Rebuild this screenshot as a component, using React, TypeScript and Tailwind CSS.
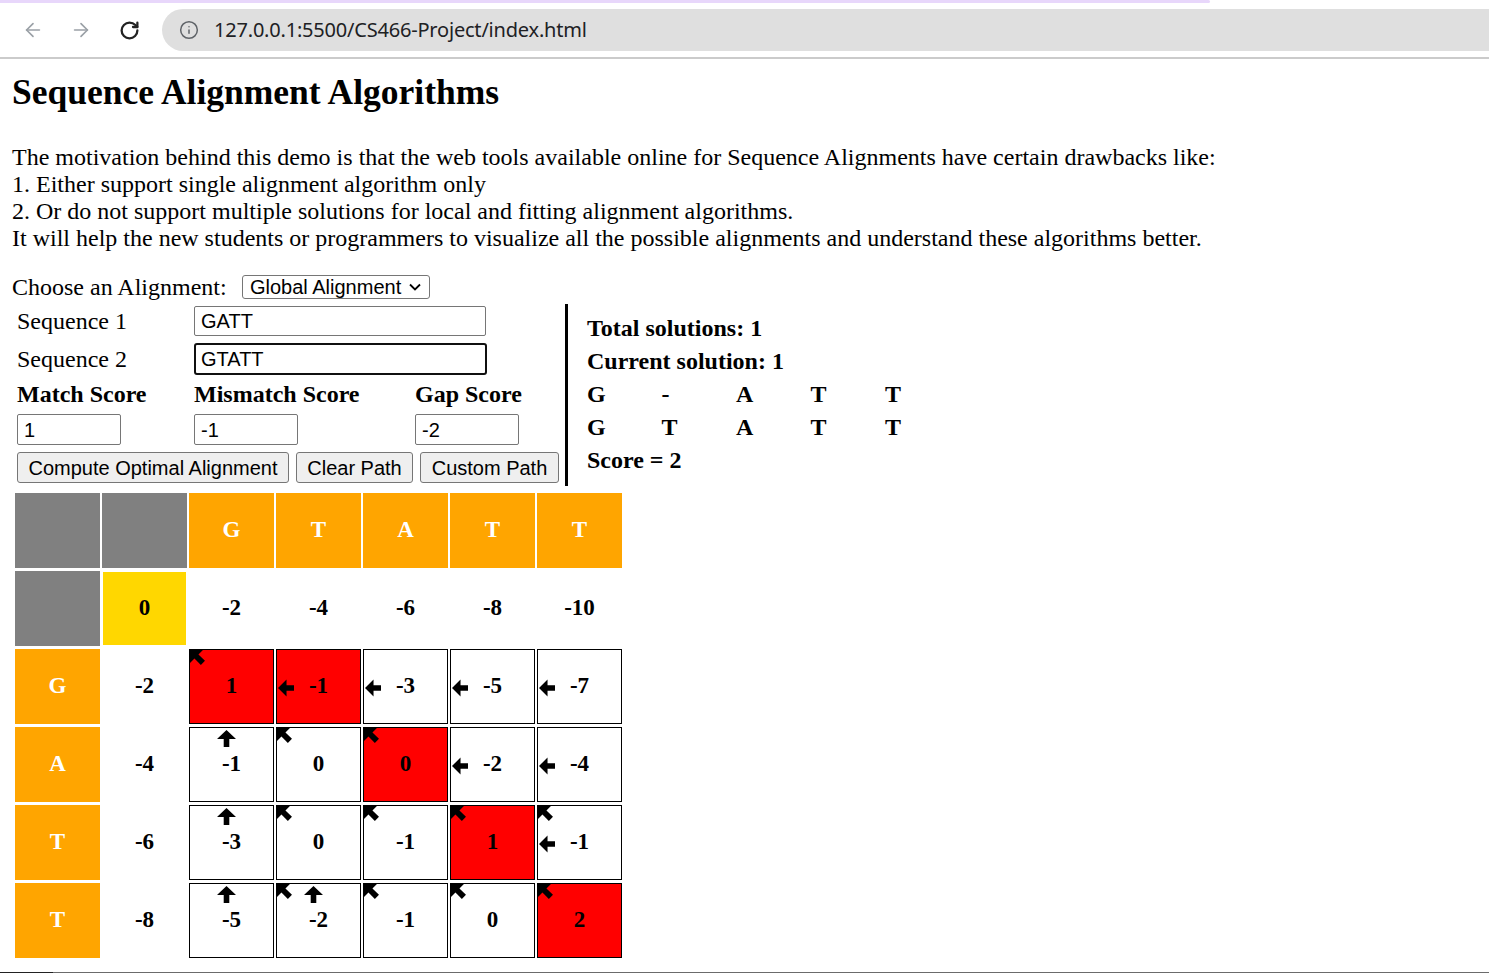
import { ArrowLeft, ArrowRight, RotateCw, Info } from 'lucide-react';

type Cell = { v: number; red?: boolean; d?: boolean; l?: boolean; u?: boolean };

const topLetters = ['G', 'T', 'A', 'T', 'T'];
const topRow = [-2, -4, -6, -8, -10];

const rows: { letter: string; head: number; cells: Cell[] }[] = [
  {
    letter: 'G',
    head: -2,
    cells: [
      { v: 1, red: true, d: true },
      { v: -1, red: true, l: true },
      { v: -3, l: true },
      { v: -5, l: true },
      { v: -7, l: true },
    ],
  },
  {
    letter: 'A',
    head: -4,
    cells: [{ v: -1, u: true }, { v: 0, d: true }, { v: 0, red: true, d: true }, { v: -2, l: true }, { v: -4, l: true }],
  },
  {
    letter: 'T',
    head: -6,
    cells: [{ v: -3, u: true }, { v: 0, d: true }, { v: -1, d: true }, { v: 1, red: true, d: true }, { v: -1, d: true, l: true }],
  },
  {
    letter: 'T',
    head: -8,
    cells: [{ v: -5, u: true }, { v: -2, d: true, u: true }, { v: -1, d: true }, { v: 0, d: true }, { v: 2, red: true, d: true }],
  },
];

const serif = "font-['Liberation_Serif','Times_New_Roman',serif]";
const sans = "font-['Liberation_Sans',Arial,sans-serif]";

// little arrow pictures drawn in the score cells
function DiagArrow() {
  return (
    <svg className="absolute left-0 top-0" width="16" height="16" viewBox="0 0 14 14">
      <path d="M0 0 L11.3 0 L7.4 3.9 L13.1 9.5 L9.5 13.1 L3.9 7.4 L0 11.3 Z" fill="#000" />
    </svg>
  );
}

function LeftArrow() {
  return (
    <svg className="absolute left-[1px] top-[29px]" width="16" height="18" viewBox="0 0 15 16">
      <path d="M0 8 L8 0 L8 5.5 L15 5.5 L15 10.5 L8 10.5 L8 16 Z" fill="#000" />
    </svg>
  );
}

function UpArrow() {
  return (
    <svg className="absolute left-[27px] top-[2px]" width="19" height="17" viewBox="0 0 17 15">
      <path d="M8.5 0 L17 8 L11 8 L11 15 L6 15 L6 8 L0 8 Z" fill="#000" />
    </svg>
  );
}

function ScoreCell({ cell }: { cell: Cell }) {
  return (
    <div
      className={`relative flex items-center justify-center border-[1.5px] border-black overflow-hidden ${
        cell.red ? 'bg-[#ff0000]' : 'bg-white'
      }`}
    >
      {cell.d && <DiagArrow />}
      {cell.l && <LeftArrow />}
      {cell.u && <UpArrow />}
      <span>{cell.v}</span>
    </div>
  );
}

export default function App() {
  return (
    <div className={`h-[973px] w-full flex flex-col overflow-hidden bg-white text-black ${serif}`}>
      {/* Browser chrome */}
      <div className="h-[3px] w-[1210px] bg-[#e8d7fb] rounded-r-[2px]" />
      <div className="h-[54px] flex items-center">
        <div className="w-[66px] flex justify-center">
          <ArrowLeft size={22} strokeWidth={1.8} className="text-[#9aa0a6]" />
        </div>
        <div className="w-[30px] flex justify-center">
          <ArrowRight size={22} strokeWidth={1.8} className="text-[#9aa0a6]" />
        </div>
        <div className="w-[66px] flex justify-center">
          <RotateCw size={21} strokeWidth={2.6} className="text-[#222]" />
        </div>
        <div className="flex-1 h-[42px] bg-[#dfdfdf] rounded-l-full flex items-center pl-[17px] gap-[15px]">
          <Info size={20} strokeWidth={1.8} className="text-[#5f6368]" />
          <span className="font-['Noto_Sans',sans-serif] text-[20px] text-[#202124] tracking-[-0.2px]">
            127.0.0.1:5500/CS466-Project/index.html
          </span>
        </div>
      </div>
      <div className="h-[2px] bg-[#cbcbcb]" />

      {/* Page */}
      <div className="pl-[12px]">
        <h1 className="mt-[14px] text-[35.5px] leading-[38px] font-bold">Sequence Alignment Algorithms</h1>
        <p className="mt-[33px] text-[24px] leading-[27px]">
          The motivation behind this demo is that the web tools available online for Sequence Alignments have certain
          drawbacks like:
          <br />
          1. Either support single alignment algorithm only
          <br />
          2. Or do not support multiple solutions for local and fitting alignment algorithms.
          <br />
          It will help the new students or programmers to visualize all the possible alignments and understand these
          algorithms better.
        </p>

        <div className="mt-[23px] h-[24px] flex items-center text-[24px]">
          <span className="w-[230px]">Choose an Alignment:</span>
          <div
            className={`h-[24px] w-[188px] border border-[#767676] rounded-[3px] flex items-center justify-between pl-[7px] pr-[8px] text-[20px] ${sans}`}
          >
            <span>Global Alignment</span>
            <svg width="12" height="8" viewBox="0 0 12 8">
              <path d="M1 1.5 L6 6.5 L11 1.5" fill="none" stroke="#000" strokeWidth="1.8" />
            </svg>
          </div>
        </div>

        <div className="mt-[5px] flex items-start">
          {/* form */}
          <div className="w-[553px] pl-[5px] pt-[2px]">
            <div className="flex items-center h-[30px]">
              <span className="w-[177px] text-[24px]">Sequence 1</span>
              <div
                className={`w-[292px] h-[30px] border border-[#767676] rounded-[2px] flex items-center px-[6px] text-[20px] ${sans}`}
              >
                GATT
              </div>
            </div>
            <div className="mt-[7px] flex items-center h-[32px]">
              <span className="w-[177px] text-[24px]">Sequence 2</span>
              <div
                className={`w-[293px] h-[32px] border-2 border-[#101010] rounded-[3px] flex items-center px-[5px] text-[20px] ${sans}`}
              >
                GTATT
              </div>
            </div>
            <div className="mt-[7px] h-[24px] flex items-center text-[24px] font-bold">
              <span className="w-[177px]">Match Score</span>
              <span className="w-[221px]">Mismatch Score</span>
              <span>Gap Score</span>
            </div>
            <div className={`mt-[8px] h-[31px] flex text-[20px] ${sans}`}>
              <div className="w-[177px]">
                <div className="w-[104px] h-[31px] border border-[#767676] rounded-[2px] flex items-center px-[6px]">1</div>
              </div>
              <div className="w-[221px]">
                <div className="w-[104px] h-[31px] border border-[#767676] rounded-[2px] flex items-center px-[6px]">-1</div>
              </div>
              <div className="w-[104px] h-[31px] border border-[#767676] rounded-[2px] flex items-center px-[6px]">-2</div>
            </div>
            <div className={`mt-[7px] h-[31px] flex gap-[7px] text-[20px] ${sans}`}>
              <div className="w-[272px] border border-[#767676] rounded-[3px] bg-[#efefef] flex items-center justify-center">
                Compute Optimal Alignment
              </div>
              <div className="w-[117px] border border-[#767676] rounded-[3px] bg-[#efefef] flex items-center justify-center">
                Clear Path
              </div>
              <div className="w-[139px] border border-[#767676] rounded-[3px] bg-[#efefef] flex items-center justify-center">
                Custom Path
              </div>
            </div>
          </div>

          {/* solution panel */}
          <div className="h-[182px] border-l-[3px] border-black pl-[19px] pt-[8px] text-[24px] leading-[33px] font-bold">
            <div>Total solutions: 1</div>
            <div>Current solution: 1</div>
            <div className="grid grid-cols-[repeat(5,74.5px)]">
              {['G', '-', 'A', 'T', 'T'].map((c, i) => (
                <span key={i}>{c}</span>
              ))}
            </div>
            <div className="grid grid-cols-[repeat(5,74.5px)]">
              {['G', 'T', 'A', 'T', 'T'].map((c, i) => (
                <span key={i}>{c}</span>
              ))}
            </div>
            <div>Score = 2</div>
          </div>
        </div>

        {/* DP matrix */}
        <div className="mt-[7px] ml-[3px] grid grid-cols-[repeat(7,85px)] auto-rows-[75px] gap-x-[2px] gap-y-[3px] text-[23px] font-bold">
          <div className="bg-[#808080]" />
          <div className="bg-[#808080]" />
          {topLetters.map((c, i) => (
            <div key={i} className="bg-[#ffa500] text-white flex items-center justify-center">
              {c}
            </div>
          ))}

          <div className="bg-[#808080]" />
          <div className="m-[1px] bg-[#ffd700] flex items-center justify-center">0</div>
          {topRow.map((v, i) => (
            <div key={i} className="flex items-center justify-center">
              {v}
            </div>
          ))}

          {rows.map((r, ri) => (
            <div key={ri} className="contents">
              <div className="bg-[#ffa500] text-white flex items-center justify-center">{r.letter}</div>
              <div className="flex items-center justify-center">{r.head}</div>
              {r.cells.map((c, ci) => (
                <ScoreCell key={ci} cell={c} />
              ))}
            </div>
          ))}
        </div>
      </div>

      <div className="mt-auto h-[1px] flex">
        <div className="w-[53px] bg-[#222]" />
        <div className="flex-1 bg-[#6b6b6b]" />
      </div>
    </div>
  );
}
